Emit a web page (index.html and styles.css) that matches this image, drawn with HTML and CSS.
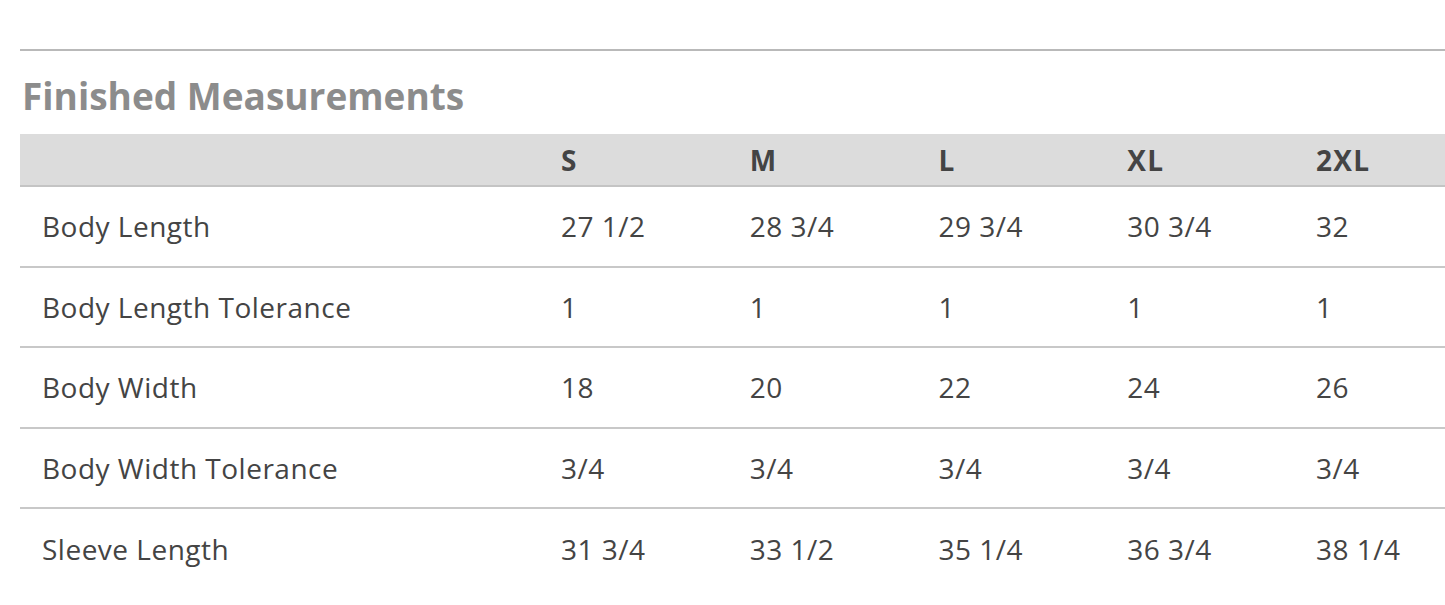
FILE: index.html
```html
<!DOCTYPE html>
<html lang="en">
<head>
<meta charset="utf-8">
<title>Finished Measurements</title>
<link rel="stylesheet" href="styles.css">
</head>
<body>
<section class="measurements">
  <h2 class="title">Finished Measurements</h2>
  <table class="size-table">
    <colgroup>
      <col class="c-label">
      <col class="c-size">
      <col class="c-size">
      <col class="c-size">
      <col class="c-size">
      <col>
    </colgroup>
    <thead>
      <tr><th></th><th>S</th><th>M</th><th>L</th><th>XL</th><th>2XL</th></tr>
    </thead>
    <tbody>
      <tr><td>Body Length</td><td>27 1/2</td><td>28 3/4</td><td>29 3/4</td><td>30 3/4</td><td>32</td></tr>
      <tr><td>Body Length Tolerance</td><td>1</td><td>1</td><td>1</td><td>1</td><td>1</td></tr>
      <tr><td>Body Width</td><td>18</td><td>20</td><td>22</td><td>24</td><td>26</td></tr>
      <tr><td>Body Width Tolerance</td><td>3/4</td><td>3/4</td><td>3/4</td><td>3/4</td><td>3/4</td></tr>
      <tr><td>Sleeve Length</td><td>31 3/4</td><td>33 1/2</td><td>35 1/4</td><td>36 3/4</td><td>38 1/4</td></tr>
    </tbody>
  </table>
</section>
</body>
</html>
```

FILE: styles.css
```css
html, body {
  margin: 0;
  padding: 0;
  background: #ffffff;
}

body {
  font-family: "Open Sans", "Noto Sans", sans-serif;
  color: #444444;
}

.measurements {
  margin: 49px 0 0 20px;
  border-top: 2px solid #b9b9b9;
}

.title {
  margin: 0;
  padding: 25px 0 0 2px;
  height: 83px;
  box-sizing: border-box;
  font-size: 37px;
  line-height: 40px;
  font-weight: 700;
  color: #8c8c8c;
}

.size-table {
  width: 1425px;
  border-collapse: collapse;
  table-layout: fixed;
}

.c-label { width: 520px; }
.c-size { width: 188.75px; }

.size-table thead th {
  background: #dcdcdc;
  height: 52px;
  padding: 0 0 0 21px;
  text-align: left;
  font-size: 28px;
  letter-spacing: 1.3px;
  font-weight: 700;
  color: #444444;
  border-bottom: 2px solid #c4c4c4;
  box-sizing: border-box;
}

.size-table tbody td {
  height: 80.5px;
  padding: 0 0 0 21px;
  text-align: left;
  font-size: 28px;
  letter-spacing: 0.5px;
  color: #444444;
  border-bottom: 2px solid #c8c8c8;
  box-sizing: border-box;
}

.size-table tbody td:first-child {
  padding-left: 22px;
}

.size-table tbody tr:last-child td {
  border-bottom: none;
}
```
